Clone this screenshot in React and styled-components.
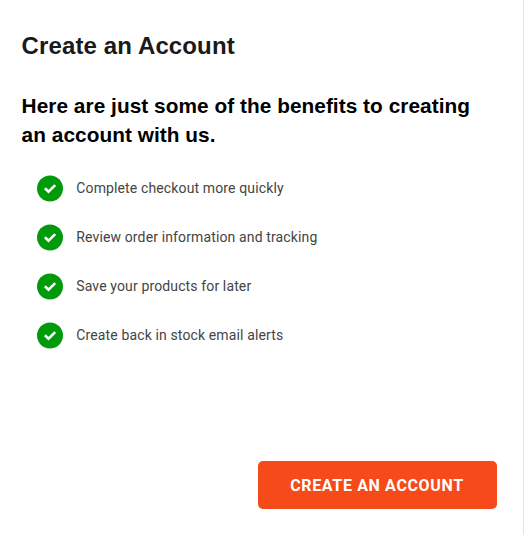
import React from 'react';
import styled, { createGlobalStyle } from 'styled-components';

const GlobalStyle = createGlobalStyle`
  * {
    box-sizing: border-box;
  }

  body {
    margin: 0;
    background: #fff;
    font-family: Roboto, sans-serif;
  }
`;

const Panel = styled.section`
  display: flex;
  flex-direction: column;
  width: 524px;
  height: 535px;
  padding: 28px 26px 26px 21.6px;
  border-right: 1px solid #e5e5e5;
`;

const Title = styled.h2`
  margin: 0;
  font-family: 'Liberation Sans', Arial, sans-serif;
  font-size: 24px;
  font-weight: 700;
  line-height: 36px;
  letter-spacing: 0.12px;
  color: #1a1a1a;
`;

const Subtitle = styled.h3`
  margin: 27px 0 0;
  font-family: 'Liberation Sans', Arial, sans-serif;
  font-size: 20.8px;
  font-weight: 700;
  line-height: 29px;
  letter-spacing: 0.05px;
  color: #000;
`;

const BenefitList = styled.ul`
  display: flex;
  flex-direction: column;
  gap: 22px;
  margin: 26px 0 0;
  padding: 0 0 0 15px;
  list-style: none;
`;

const Benefit = styled.li`
  display: flex;
  align-items: center;
  gap: 13.7px;
  height: 27px;
  font-size: 14px;
  letter-spacing: 0.13px;
  color: #444;
`;

const BenefitText = styled.span`
  padding-bottom: 2px;
`;

const IconSvg = styled.svg`
  flex: none;
  width: 26px;
  height: 27px;
  color: #009a0a;
`;

const CreateButton = styled.button`
  align-self: flex-end;
  width: 239px;
  height: 48px;
  margin-top: auto;
  padding: 0 1px 0 0;
  border: 0;
  border-radius: 5px;
  background: #f64a1a;
  font-family: Roboto, sans-serif;
  font-size: 16px;
  font-weight: 700;
  letter-spacing: 0.65px;
  text-transform: uppercase;
  color: #fff;
`;

const benefits = [
  'Complete checkout more quickly',
  'Review order information and tracking',
  'Save your products for later',
  'Create back in stock email alerts',
];

function CheckIcon() {
  return (
    <IconSvg viewBox="0 0 26 27" aria-hidden="true">
      <circle cx="13" cy="13.5" r="13" fill="currentColor" />
      <path
        d="M7.9 13.3 L11.5 16.7 L18.2 10.1"
        fill="none"
        stroke="#fff"
        strokeWidth="2.6"
      />
    </IconSvg>
  );
}

export default function App() {
  return (
    <>
      <GlobalStyle />
      <Panel>
        <Title>Create an Account</Title>
        <Subtitle>
          Here are just some of the benefits to creating an account with us.
        </Subtitle>
        <BenefitList>
          {benefits.map((benefit) => (
            <Benefit key={benefit}>
              <CheckIcon />
              <BenefitText>{benefit}</BenefitText>
            </Benefit>
          ))}
        </BenefitList>
        <CreateButton type="button">Create an Account</CreateButton>
      </Panel>
    </>
  );
}
